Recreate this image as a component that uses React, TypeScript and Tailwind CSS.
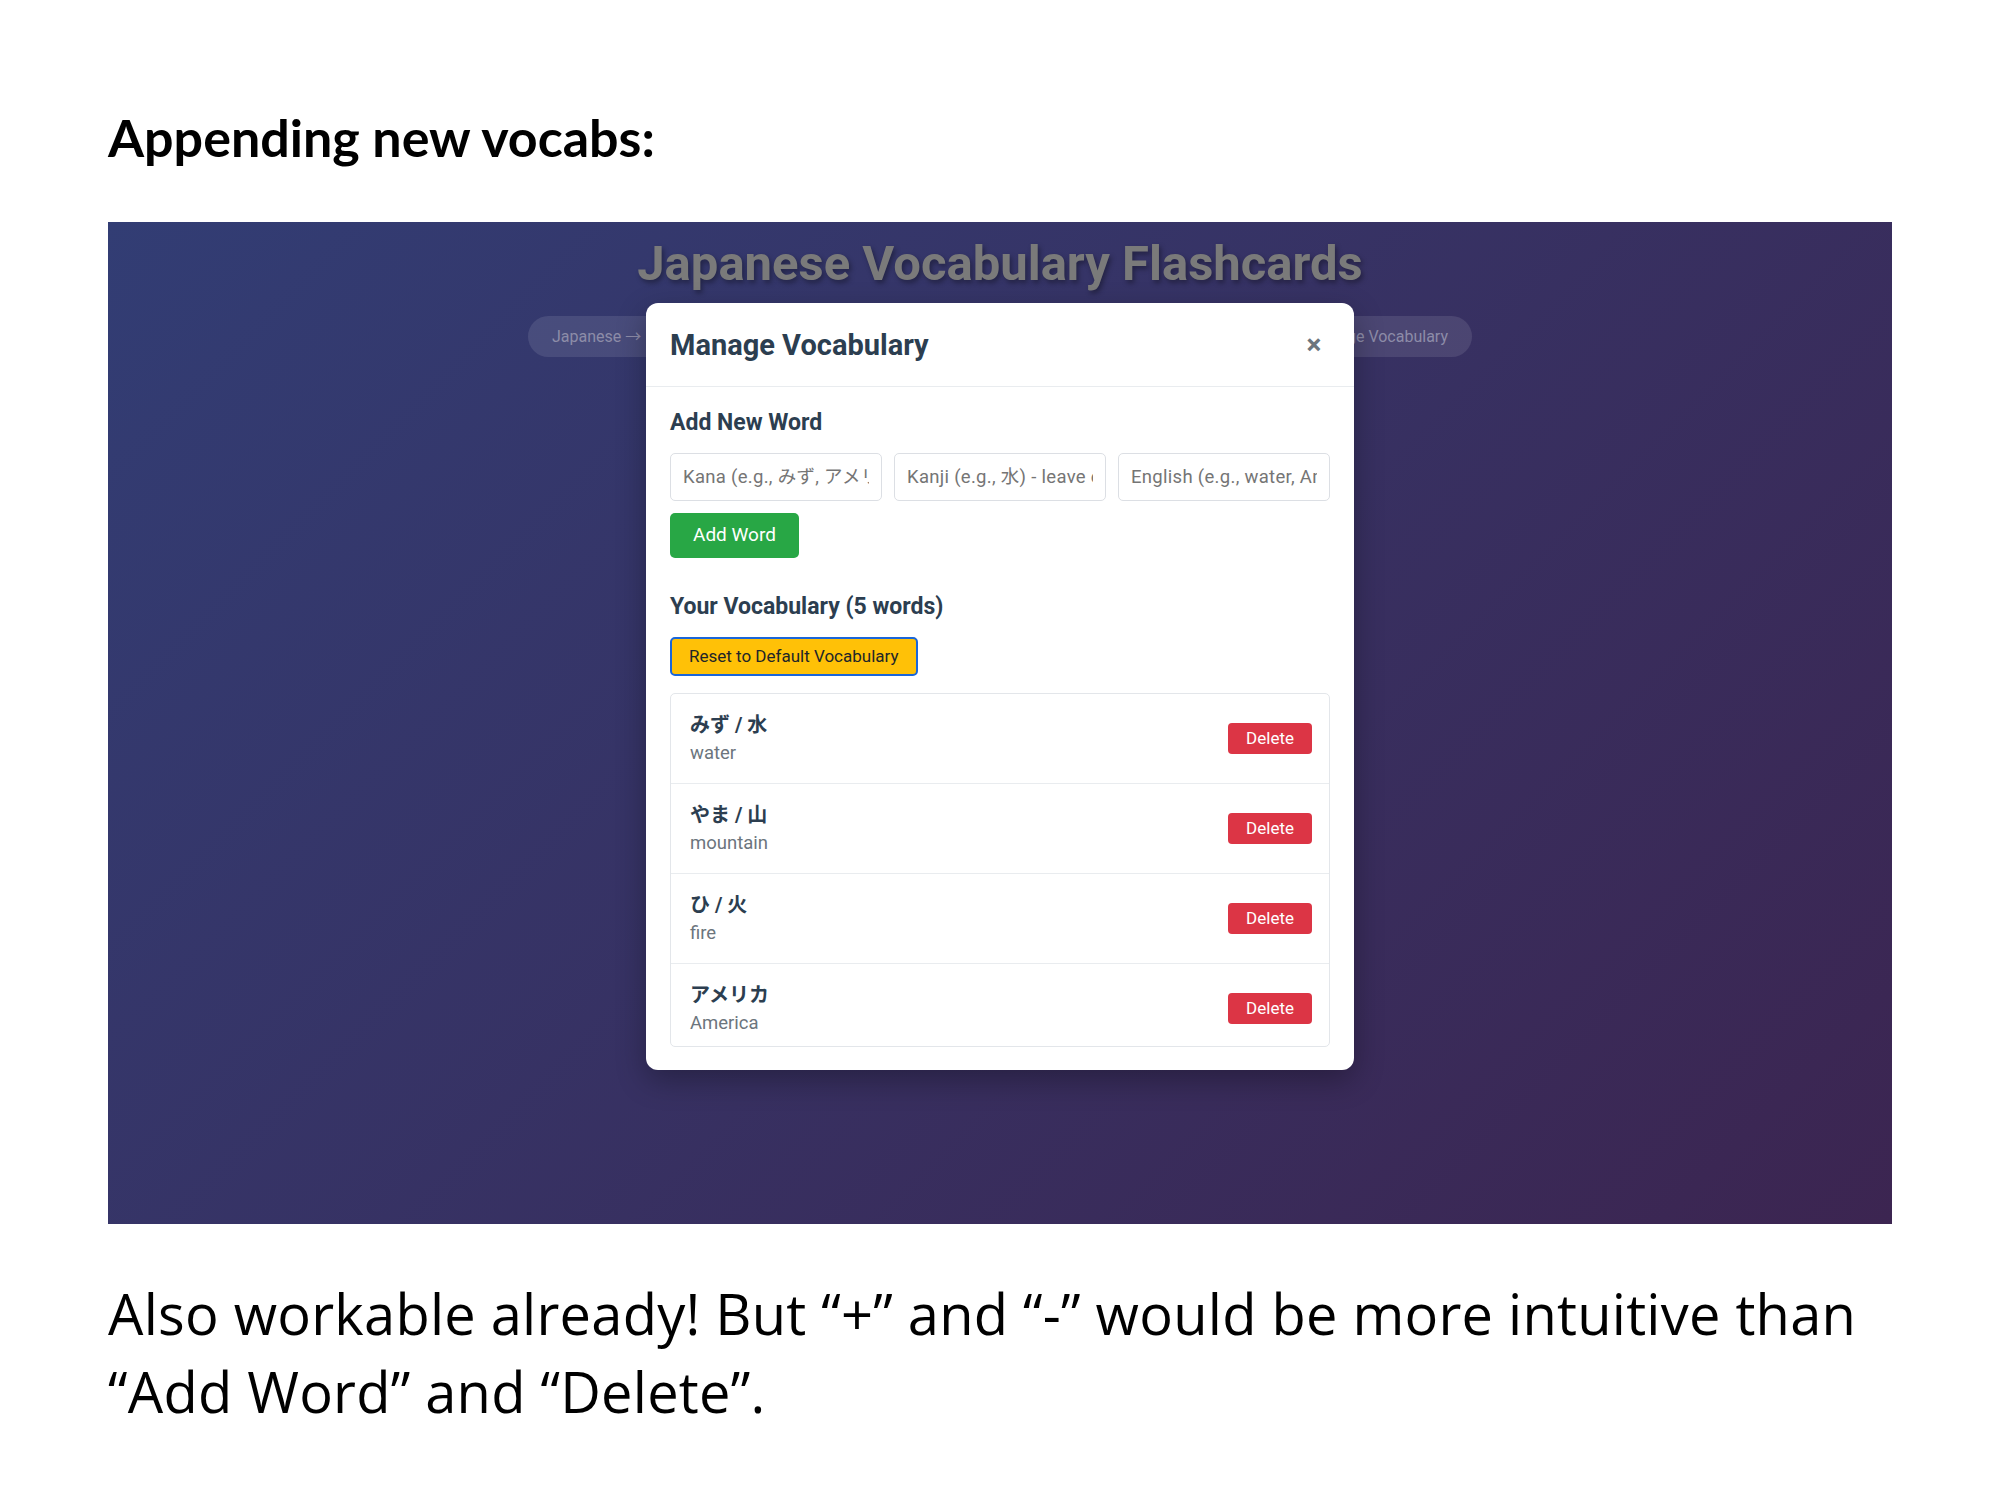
const words = [
  { kana: 'みず', kanji: '水', english: 'water' },
  { kana: 'やま', kanji: '山', english: 'mountain' },
  { kana: 'ひ', kanji: '火', english: 'fire' },
  { kana: 'アメリカ', kanji: '', english: 'America' },
  { kana: 'ねこ', kanji: '猫', english: 'cat' },
];

const appFont = "font-['Roboto','Noto_Sans_CJK_JP',sans-serif]";

const inputCls =
  'h-[48px] min-w-0 flex-1 rounded-[5px] border border-[#dcdfe4] px-[12px] text-[18.5px] tracking-[0.3px] placeholder:text-[#757575]';

const VocabModal = () => (
  <div className="absolute left-1/2 top-[81px] w-[708px] -translate-x-1/2 rounded-[12px] bg-white shadow-[0_10px_30px_rgba(0,0,0,0.3)]">
    <div className="flex h-[84px] items-center justify-between border-b border-[#e9ecef] px-[24px]">
      <h2 className="text-[29px] font-bold leading-[34px] text-[#2c3e50]">Manage Vocabulary</h2>
      <button className="w-[32px] text-center text-[28px] font-bold leading-[30px] text-[#6c757d]">×</button>
    </div>
    <div className="px-[24px] pt-[23px] pb-[23px]">
      <h3 className="text-[23px] font-bold leading-[26px] text-[#2c3e50]">Add New Word</h3>
      <div className="mt-[17px] flex gap-[12px]">
        <input className={inputCls} placeholder="Kana (e.g., みず, アメリカ)" />
        <input className={inputCls} placeholder="Kanji (e.g., 水) - leave empty if none" />
        <input className={inputCls} placeholder="English (e.g., water, America)" />
      </div>
      <button className="mt-[12px] h-[45px] rounded-[5px] bg-[#28a745] px-[23px] text-[19px] text-white">
        Add Word
      </button>

      <h3 className="mt-[36px] text-[23px] font-bold leading-[26px] text-[#2c3e50]">Your Vocabulary (5 words)</h3>
      <button className="mt-[17px] h-[39px] rounded-[5px] border-2 border-[#1a66d9] bg-[#ffc107] px-[17px] text-[17px] text-[#212529]">
        Reset to Default Vocabulary
      </button>
      <div className="mt-[17px] h-[354px] overflow-hidden rounded-[5px] border border-[#e3e6ea]">
        {words.map((w) => (
          <div key={w.english} className="flex items-center justify-between border-b border-[#e9ecef] py-[17px] pl-[19px] pr-[17px]">
            <div>
              <div className="text-[20px] font-bold leading-[28px] text-[#2c3e50]">
                {w.kanji ? `${w.kana} / ${w.kanji}` : w.kana}
              </div>
              <div className="mt-[2px] text-[18.5px] leading-[25px] text-[#6c757d]">{w.english}</div>
            </div>
            <button className="h-[31px] rounded-[4px] bg-[#dc3545] px-[18px] text-[17px] text-white">Delete</button>
          </div>
        ))}
      </div>
    </div>
  </div>
);

const Screenshot = () => (
  <div className={`relative mt-[53px] h-[1002px] w-[1784px] bg-[linear-gradient(135deg,#323d74_0%,#3c2551_100%)] ${appFont}`}>
    <div className="flex flex-col items-center pt-[14px]">
      <h1 className="text-[49px] font-bold leading-[56px] text-[#7a7a7a] [text-shadow:2px_3px_5px_rgba(0,0,0,0.35)]">
        Japanese Vocabulary Flashcards
      </h1>
      <div className="mt-[24px] flex w-[944px] justify-between">
        <span className="flex h-[41px] items-center rounded-full bg-white/10 px-[24px] text-[16px] text-[#8d8ca8]">
          Japanese → English
        </span>
        <span className="flex h-[41px] items-center rounded-full bg-white/10 px-[24px] text-[16px] text-[#8d8ca8]">
          Shuffle Cards
        </span>
        <span className="flex h-[41px] items-center rounded-full bg-white/10 px-[24px] text-[16px] text-[#8d8ca8]">
          Manage Vocabulary
        </span>
      </div>
    </div>
    <VocabModal />
  </div>
);

export default function App() {
  return (
    <div className="min-h-screen w-[2000px] bg-white pl-[108px] pt-[105px]">
      <h1 className="font-['Lato',sans-serif] text-[52px] font-bold leading-[64px] text-black">Appending new vocabs:</h1>
      <Screenshot />
      <p className="mt-[50px] w-[1784px] font-['Open_Sans',sans-serif] text-[56px] leading-[78px] tracking-[0.24px] text-black">
        Also workable already! But “+” and “-” would be more intuitive than “Add Word” and “Delete”.
      </p>
    </div>
  );
}
